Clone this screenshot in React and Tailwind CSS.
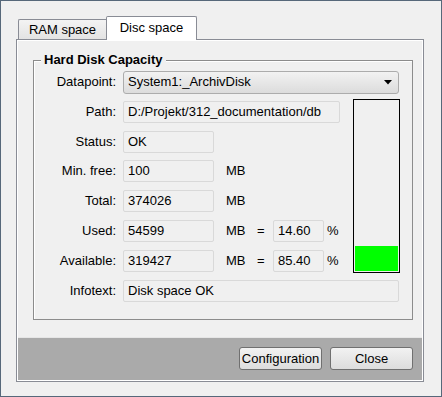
import React from "react";

const font = { fontFamily: '"Liberation Sans", Arial, sans-serif' };

function Field({ w, children }) {
  return (
    <div
      className={`${w} h-[22px] flex items-center px-[4px] border border-[#d9d9d9] rounded-[2px] bg-[#f0f0f0] text-[13px] text-black whitespace-nowrap overflow-hidden`}
    >
      {children}
    </div>
  );
}

function Row({ label, children, mt }) {
  return (
    <div className={`flex items-center h-[22px] ${mt}`}>
      <div className="w-[82px] text-right text-[13px] text-black">{label}</div>
      <div className="ml-[7px] flex items-center">{children}</div>
    </div>
  );
}

function MB() {
  return <span className="ml-[12px] w-[31px] text-[13px] text-black">MB</span>;
}

export default function App() {
  return (
    <div
      style={font}
      className="w-[442px] h-[397px] border border-[#56687a] bg-[#f0f0f0] flex flex-col pt-[15px]"
    >
      {/* tabs */}
      <div className="flex items-end h-[23px] pl-[17px]">
        <div className="w-[88px] h-[20px] border-l border-t border-[#898c95] rounded-tl-[2px] bg-gradient-to-b from-[#f3f3f3] to-[#e3e3e3] flex items-center justify-center text-[13px] text-black">
          RAM space
        </div>
        <div className="relative z-10 w-[91px] h-[24px] -mb-px border-l border-t border-r border-[#898c95] rounded-t-[2px] bg-white flex items-center justify-center pb-[1px] text-[13px] text-black">
          Disc space
        </div>
      </div>

      {/* pane */}
      <div className="ml-[15px] w-[408px] h-[343px] border border-[#898c95] shadow-[inset_0_0_0_1px_#ffffff] p-[1px] flex flex-col">
        <div className="flex-1 pt-[19px] pl-[15px]">
          {/* group box */}
          <div className="relative w-[380px] h-[260px] border border-[#8c8c8c] shadow-[inset_1px_1px_0_#ffffff] pt-[10px] pr-[12px]">
            <span className="absolute left-[7px] -top-[9px] px-[3px] bg-[#f0f0f0] text-[13px] leading-[16px] font-bold text-black">
              Hard Disk Capacity
            </span>

            <Row label="Datapoint:">
              <div className="w-[276px] h-[23px] flex items-center justify-between pl-[4px] pr-[6px] border border-[#acacac] rounded-[3px] bg-gradient-to-b from-[#f2f2f2] to-[#dcdcdc] text-[13px] text-black">
                <span>System1:_ArchivDisk</span>
                <svg width="8" height="5" viewBox="0 0 8 5">
                  <path d="M0 0 H8 L4 4.5 Z" fill="#000" />
                </svg>
              </div>
            </Row>

            <div className="flex mt-[6px]">
              <div className="flex-1 pt-[2px] flex flex-col">
                <Row label="Path:">
                  <Field w="w-[217px]">D:/Projekt/312_documentation/db</Field>
                </Row>
                <Row label="Status:" mt="mt-[8px]">
                  <Field w="w-[91px]">OK</Field>
                </Row>
                <Row label="Min. free:" mt="mt-[7px]">
                  <Field w="w-[91px]">100</Field>
                  <MB />
                </Row>
                <Row label="Total:" mt="mt-[8px]">
                  <Field w="w-[91px]">374026</Field>
                  <MB />
                </Row>
                <Row label="Used:" mt="mt-[8px]">
                  <Field w="w-[91px]">54599</Field>
                  <MB />
                  <span className="w-[16px] text-[13px] text-black">=</span>
                  <Field w="w-[51px]">14.60</Field>
                  <span className="ml-[3px] text-[13px] text-black">%</span>
                </Row>
                <Row label="Available:" mt="mt-[8px]">
                  <Field w="w-[91px]">319427</Field>
                  <MB />
                  <span className="w-[16px] text-[13px] text-black">=</span>
                  <Field w="w-[51px]">85.40</Field>
                  <span className="ml-[3px] text-[13px] text-black">%</span>
                </Row>
              </div>
              <div className="w-[47px] h-[174px] border border-black p-[1px] flex flex-col justify-end">
                <div className="h-[25px] bg-[#00ff00]" />
              </div>
            </div>

            <Row label="Infotext:" mt="mt-[7px]">
              <Field w="w-[276px]">Disk space OK</Field>
            </Row>
          </div>
        </div>

        {/* footer */}
        <div className="h-[43px] bg-[#aaaaaa] border-t border-[#e6e6e6] flex items-start justify-end gap-[8px] pt-[9px] pr-[9px]">
          <button className="w-[83px] h-[23px] border border-[#707070] rounded-[3px] bg-gradient-to-b from-[#f2f2f2] to-[#dddddd] text-[13px] text-black">
            Configuration
          </button>
          <button className="w-[83px] h-[23px] border border-[#707070] rounded-[3px] bg-gradient-to-b from-[#f2f2f2] to-[#dddddd] text-[13px] text-black">
            Close
          </button>
        </div>
      </div>
    </div>
  );
}
